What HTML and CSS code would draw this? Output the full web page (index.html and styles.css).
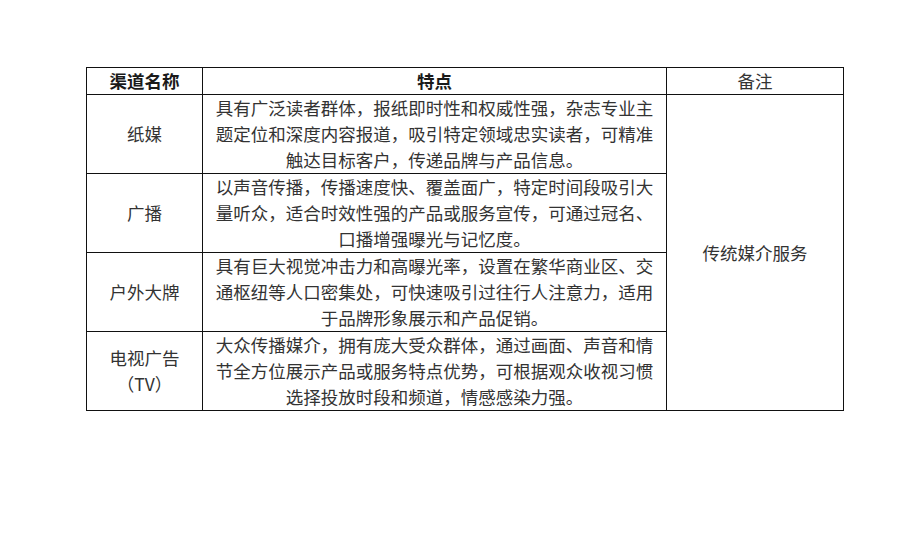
FILE: index.html
```html
<!DOCTYPE html>
<html lang="zh-CN">
<head>
<meta charset="utf-8">
<title>渠道</title>
<link rel="stylesheet" href="styles.css">
</head>
<body>
<table class="grid">
  <colgroup>
    <col class="c-name">
    <col class="c-feat">
    <col class="c-note">
  </colgroup>
  <thead>
    <tr class="head">
      <th class="h-name">渠道名称</th>
      <th class="h-feat">特点</th>
      <th class="h-note">备注</th>
    </tr>
  </thead>
  <tbody>
    <tr class="row">
      <td class="name">纸媒</td>
      <td class="feat"><span class="ln">具有广泛读者群体，报纸即时性和权威性强，杂志专业主</span><span class="ln">题定位和深度内容报道，吸引特定领域忠实读者，可精准</span><span class="ln">触达目标客户，传递品牌与产品信息。</span></td>
      <td class="note" rowspan="4">传统媒介服务</td>
    </tr>
    <tr class="row">
      <td class="name">广播</td>
      <td class="feat"><span class="ln">以声音传播，传播速度快、覆盖面广，特定时间段吸引大</span><span class="ln">量听众，适合时效性强的产品或服务宣传，可通过冠名、</span><span class="ln">口播增强曝光与记忆度。</span></td>
    </tr>
    <tr class="row">
      <td class="name">户外大牌</td>
      <td class="feat"><span class="ln">具有巨大视觉冲击力和高曝光率，设置在繁华商业区、交</span><span class="ln">通枢纽等人口密集处，可快速吸引过往行人注意力，适用</span><span class="ln">于品牌形象展示和产品促销。</span></td>
    </tr>
    <tr class="row">
      <td class="name"><span class="ln">电视广告</span><span class="ln">（TV）</span></td>
      <td class="feat"><span class="ln">大众传播媒介，拥有庞大受众群体，通过画面、声音和情</span><span class="ln">节全方位展示产品或服务特点优势，可根据观众收视习惯</span><span class="ln">选择投放时段和频道，情感感染力强。</span></td>
    </tr>
  </tbody>
</table>
</body>
</html>
```

FILE: styles.css
```css
html, body {
  margin: 0;
  padding: 0;
  background: #ffffff;
}

body {
  font-family: "Noto Sans CJK SC", "Noto Sans", sans-serif;
  color: #333333;
}

.grid {
  margin: 67px 0 0 86px;
  border-collapse: collapse;
  table-layout: fixed;
  width: 757px;
  font-size: 17.5px;
  line-height: 26px;
}

.c-name { width: 116px; }
.c-feat { width: 464px; }
.c-note { width: 177px; }

.grid th,
.grid td {
  border: 1px solid #111111;
  padding: 0 4px;
  text-align: center;
  vertical-align: middle;
}

.ln {
  display: block;
  white-space: nowrap;
  text-align: center;
}

.grid th {
  font-weight: 700;
  color: #1a1a1a;
}

.grid th.h-note {
  font-weight: 400;
  color: #333333;
}

.head th {
  height: 25px;
}

.row td {
  height: 78px;
}
```
